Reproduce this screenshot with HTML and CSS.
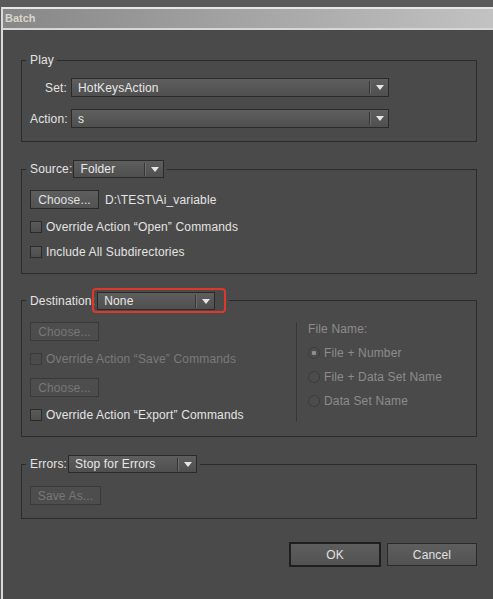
FILE: index.html
```html
<!DOCTYPE html>
<html lang="en">

<head>
    <meta charset="utf-8">
    <title>Batch</title>
    <link rel="stylesheet" href="styles.css">
</head>

<body>
    <div class="window">
        <div class="titlebar">Batch</div>

        <div class="dialog">
            <!-- Play -->
            <fieldset class="group play">
                <legend>Play</legend>
                <div class="play-grid">
                    <label>Set:</label>
                    <div class="select set-select">
                        <span class="value">HotKeysAction</span>
                        <span class="sep"></span>
                        <span class="arrow"><svg width="8" height="5" viewBox="0 0 8 5"><polygon points="0,0 8,0 4,5" fill="#e6e6e6"/></svg></span>
                    </div>
                    <label>Action:</label>
                    <div class="select set-select">
                        <span class="value">s</span>
                        <span class="sep"></span>
                        <span class="arrow"><svg width="8" height="5" viewBox="0 0 8 5"><polygon points="0,0 8,0 4,5" fill="#e6e6e6"/></svg></span>
                    </div>
                </div>
            </fieldset>

            <!-- Source -->
            <fieldset class="group source">
                <legend>
                    <span class="legend-row">Source:
                        <span class="select small source-select">
                            <span class="value">Folder</span>
                            <span class="sep"></span>
                            <span class="arrow"><svg width="8" height="5" viewBox="0 0 8 5"><polygon points="0,0 8,0 4,5" fill="#e6e6e6"/></svg></span>
                        </span>
                    </span>
                </legend>
                <div class="stack">
                    <div class="row">
                        <button class="btn">Choose...</button>
                        <span>D:\TEST\Ai_variable</span>
                    </div>
                    <label class="check"><input type="checkbox">Override Action “Open” Commands</label>
                    <label class="check"><input type="checkbox">Include All Subdirectories</label>
                </div>
            </fieldset>

            <!-- Destination -->
            <fieldset class="group dest">
                <legend>
                    <span class="legend-row tight">Destination:
                        <span class="mark">
                            <span class="select small dest-select">
                                <span class="value">None</span>
                                <span class="sep"></span>
                                <span class="arrow"><svg width="8" height="5" viewBox="0 0 8 5"><polygon points="0,0 8,0 4,5" fill="#e6e6e6"/></svg></span>
                            </span>
                        </span>
                    </span>
                </legend>
                <div class="dest-body">
                    <div class="stack">
                        <button class="btn" disabled>Choose...</button>
                        <label class="check off"><input type="checkbox" disabled>Override Action “Save” Commands</label>
                        <button class="btn second" disabled>Choose...</button>
                        <label class="check"><input type="checkbox">Override Action “Export” Commands</label>
                    </div>
                    <div class="file-name">
                        <div class="fn-title">File Name:</div>
                        <label class="radio"><input type="radio" name="fn" checked disabled>File + Number</label>
                        <label class="radio"><input type="radio" name="fn" disabled>File + Data Set Name</label>
                        <label class="radio"><input type="radio" name="fn" disabled>Data Set Name</label>
                    </div>
                </div>
            </fieldset>

            <!-- Errors -->
            <fieldset class="group errors">
                <legend>
                    <span class="legend-row">Errors:
                        <span class="select small errors-select">
                            <span class="value">Stop for Errors</span>
                            <span class="sep"></span>
                            <span class="arrow"><svg width="8" height="5" viewBox="0 0 8 5"><polygon points="0,0 8,0 4,5" fill="#e6e6e6"/></svg></span>
                        </span>
                    </span>
                </legend>
                <button class="btn save-as" disabled>Save As...</button>
            </fieldset>

            <div class="actions">
                <button class="btn ok">OK</button>
                <button class="btn cancel">Cancel</button>
            </div>
        </div>
    </div>
</body>

</html>
```

FILE: styles.css
```css
body {
    margin: 0;
    background-color: #5a5a5a;
    font-family: "Liberation Sans", Arial, sans-serif;
    font-size: 12px;
    letter-spacing: 0.15px;
    color: #e4e4e4;
}

.window {
    margin: 7px 0 0 1px;
    border-left: 2px solid #d9d9d9;
    border-top: 2px solid #e6e6e6;
    background-color: #4a4a4a;
    min-height: calc(100vh - 9px);
}

.titlebar {
    height: 19px;
    line-height: 19px;
    padding-left: 2px;
    background: linear-gradient(to right, #878787, #c2c2c2);
    border-bottom: 2px solid #d6d6d6;
    font-size: 11px;
    font-weight: bold;
    letter-spacing: 0;
    color: #d8d5cc;
}

.dialog {
    padding: 23px 0 0 18px;
}

/* group boxes */
.group {
    width: 456px;
    box-sizing: border-box;
    min-inline-size: 0;
    margin: 0;
    border: 1px solid #2b2b2b;
    padding: 0 8px;
}

.group legend {
    padding: 0 3px 0 4px;
    margin-left: -4px;
    line-height: 14px;
}

.legend-row {
    display: flex;
    align-items: center;
    gap: 1px;
}

.legend-row.tight {
    gap: 0;
}

.mark {
    display: inline-flex;
    margin-left: -3px;
    border: 2px solid #e0372c;
    border-radius: 4px;
    padding: 2px 9px 1px 3px;
}

.play {
    padding-top: 11px;
    padding-bottom: 13px;
}

.play-grid {
    display: grid;
    grid-template-columns: 37px 318px;
    column-gap: 4px;
    row-gap: 12px;
    align-items: center;
}

.play-grid label {
    text-align: right;
    white-space: nowrap;
}

.source {
    margin-top: 18px;
    padding-top: 12px;
    padding-bottom: 14px;
}

.dest {
    margin-top: 14px;
    padding-top: 9px;
    padding-bottom: 14px;
}

.errors {
    margin-top: 18px;
    padding-top: 13px;
    padding-bottom: 13px;
}

/* dropdowns */
.select {
    display: flex;
    align-items: center;
    height: 19px;
    box-sizing: border-box;
    border: 1px solid #2a2a2a;
    background: linear-gradient(#5e5e5e, #4f4f4f);
    color: #e8e8e8;
}

.select.small {
    height: 18px;
}

.select .value {
    flex: 1;
    padding-left: 6px;
    white-space: nowrap;
}

.select .sep {
    width: 1px;
    height: 13px;
    background-color: #353535;
    border-right: 1px solid #6c6c6c;
}

.select .arrow {
    width: 17px;
    display: flex;
    justify-content: center;
}

.select .arrow svg {
    display: block;
}

.set-select { width: 318px; }
.source-select { width: 91px; }
.dest-select { width: 118px; }
.errors-select { width: 129px; }

/* rows and stacks */
.stack {
    display: flex;
    flex-direction: column;
    align-items: flex-start;
    gap: 11px;
}

.row {
    display: flex;
    align-items: center;
    gap: 6px;
}

.btn {
    width: 69px;
    height: 19px;
    box-sizing: border-box;
    padding: 0;
    border: 1px solid #2a2a2a;
    background: linear-gradient(#5e5e5e, #525252);
    color: #e0e0e0;
    font: inherit;
    letter-spacing: inherit;
}

.btn:disabled {
    border-color: #393939;
    background: #4d4d4d;
    color: #777;
}

.btn.second {
    margin-top: 1px;
}

.btn.save-as {
    width: 71px;
}

.check {
    display: flex;
    align-items: center;
    gap: 4px;
    height: 14px;
    white-space: nowrap;
}

.check.off {
    color: #7a7a7a;
}

input[type=checkbox] {
    appearance: none;
    width: 12px;
    height: 12px;
    margin: 0;
    box-sizing: border-box;
    border: 1px solid #2a2a2a;
    background: linear-gradient(#5a5a5a, #4e4e4e);
}

input[type=checkbox]:disabled {
    border-color: #3a3a3a;
    background: #4b4b4b;
}

/* file name options */
.dest-body {
    display: grid;
    grid-template-columns: 266px 1fr;
}

.file-name {
    border-left: 1px solid #383838;
    padding-left: 11px;
    display: flex;
    flex-direction: column;
    gap: 10px;
    color: #8c8c8c;
}

.fn-title {
    line-height: 14px;
}

.radio {
    display: flex;
    align-items: center;
    gap: 4px;
    height: 14px;
}

input[type=radio] {
    appearance: none;
    width: 12px;
    height: 12px;
    margin: 0;
    box-sizing: border-box;
    border: 1px solid #3b3b3b;
    border-radius: 50%;
    background: #4c4c4c;
}

input[type=radio]:checked {
    background: radial-gradient(circle, #8e8e8e 0 2px, #4c4c4c 2.5px);
}

/* bottom buttons */
.actions {
    width: 456px;
    display: flex;
    justify-content: flex-end;
    align-items: center;
    gap: 6px;
    margin-top: 23px;
}

.btn.ok {
    width: 92px;
    height: 25px;
    border: 2px solid #1f1f1f;
}

.btn.cancel {
    width: 90px;
    height: 23px;
}
```
